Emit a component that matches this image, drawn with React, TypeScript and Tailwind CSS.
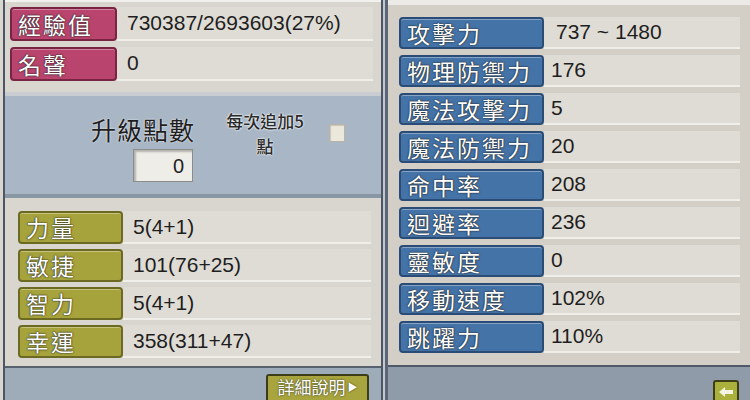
import React from "react";

const cjk = { fontFamily: '"Noto Sans CJK TC", "Noto Sans CJK SC", sans-serif' };
const num = { fontFamily: '"Liberation Sans", Arial, sans-serif' };

function Label({ text, tone, w }: { text: string; tone: "pink" | "blue" | "olive"; w: string }) {
  const cls =
    tone === "pink"
      ? "bg-[#b9446d] border-[#7a2443]"
      : tone === "blue"
      ? "bg-[#4473a8] border-[#2a4c76]"
      : "bg-[#a6a33c] border-[#6c6a22]";
  return (
    <div
      className={`${w} h-full shrink-0 rounded-[4px] border-2 ${cls} flex items-center pl-[6px] text-white text-[23px] leading-none tracking-[2px] [text-shadow:0_0_2px_#222,0_0_1px_#222] shadow-[inset_0_1px_0_rgba(255,255,255,0.35)]`}
      style={cjk}
    >
      {text}
    </div>
  );
}

function Value({ text, pl = "pl-[10px]" }: { text: string; pl?: string }) {
  return (
    <div
      className={`flex-1 h-full flex items-center ${pl} bg-[#dfdcd5] border-b-2 border-[#f0eee9] text-[#1e1e1e] text-[21px]`}
      style={num}
    >
      {text}
    </div>
  );
}

export default function App() {
  const stats = [
    ["力量", "5(4+1)"],
    ["敏捷", "101(76+25)"],
    ["智力", "5(4+1)"],
    ["幸運", "358(311+47)"],
  ];
  const right = [
    ["攻擊力", "737 ~ 1480"],
    ["物理防禦力", "176"],
    ["魔法攻擊力", "5"],
    ["魔法防禦力", "20"],
    ["命中率", "208"],
    ["迴避率", "236"],
    ["靈敏度", "0"],
    ["移動速度", "102%"],
    ["跳躍力", "110%"],
  ];
  return (
    <div className="w-[750px] h-[400px] flex overflow-hidden bg-[#cfccc6]">
      {/* LEFT PANEL */}
      <div className="w-[383px] h-full shrink-0 pl-[3px] bg-[#d9d6d0]">
        <div className="h-full flex flex-col border-l-2 border-r-2 border-[#4d5666]">
          {/* top */}
          <div className="h-[92px] shrink-0 bg-[#d9d6d0] pt-[5px] pr-[8px] flex flex-col gap-[6px] border-t-2 border-[#f2f1ee]">
            <div className="h-[34px] flex items-center pl-[5px]">
              <Label text="經驗值" tone="pink" w="w-[107px]" />
              <Value text="730387/2693603(27%)" />
            </div>
            <div className="h-[34px] flex items-center pl-[5px]">
              <Label text="名聲" tone="pink" w="w-[107px]" />
              <Value text="0" />
            </div>
          </div>
          {/* blue points */}
          <div className="h-[106px] shrink-0 bg-[#a8b6c5] border-t-4 border-[#c9ccd0] border-b-4 border-b-[#8996a4] flex">
            <div className="w-[190px] shrink-0 flex flex-col items-end pt-[19px]">
              <div className="text-[25px] leading-[29px] text-[#1e1e1e] tracking-[1px] [text-shadow:0_0_2px_#fff]" style={cjk}>
                升級點數
              </div>
              <div
                className="mt-[5px] mr-[2px] w-[60px] h-[33px] bg-[#efede8] border border-[#8c8c88] shadow-[inset_2px_2px_2px_rgba(0,0,0,0.25)] flex items-center justify-end pr-[8px] text-[20px] text-[#222]"
                style={num}
              >
                0
              </div>
            </div>
            <div className="ml-[22px] w-[96px] pt-[12px] text-center text-[17px] font-medium leading-[25px] text-[#2a2a2a] [text-shadow:0_0_2px_#fff,0_0_2px_#fff]" style={cjk}>
              每次追加5
              <br />
              點
            </div>
            <div className="ml-[16px] mt-[28px] w-[16px] h-[18px] bg-[#ebe7db] border border-[#b9b4a6] shadow-[inset_1px_1px_1px_rgba(0,0,0,0.15)]" />
          </div>
          {/* stats */}
          <div className="flex-1 bg-[#d9d6d0] pt-[13px] pr-[10px] flex flex-col gap-[5px] border-b-2 border-[#57606e]">
            {stats.map(([l, v]) => (
              <div key={l} className="h-[33px] flex items-center pl-[13px]">
                <Label text={l} tone="olive" w="w-[105px]" />
                <Value text={v} />
              </div>
            ))}
          </div>
          {/* bottom strip */}
          <div className="h-[32px] shrink-0 bg-[#9eabb9] flex justify-end items-start pr-[12px] pt-[6px]">
            <div
              className="w-[103px] h-[26px] rounded-t-[3px] border-2 border-b-0 border-[#3e3d1a] bg-[#a8a53e] text-white text-[17px] leading-[20px] flex items-start pt-[1px] justify-center gap-[2px] [text-shadow:0_0_2px_#222]"
              style={cjk}
            >
              詳細說明<span className="text-[10px] leading-[20px]">▶</span>
            </div>
          </div>
        </div>
      </div>
      {/* gap */}
      <div className="w-[2px] shrink-0 bg-[#c4c8cc]" />
      {/* RIGHT PANEL */}
      <div className="flex-1 h-full flex flex-col border-l-[3px] border-[#5a6678] bg-[#d3cfc7]">
        <div className="flex-1 border-t-[5px] border-[#eceae6] pt-[12px] pr-[10px] flex flex-col gap-[6px]">
          {right.map(([l, v], i) => (
            <div key={l} className="h-[32px] flex items-center pl-[11px]">
              <Label text={l} tone="blue" w="w-[145px]" />
              <Value text={v} pl={i === 0 ? "pl-[12px]" : "pl-[7px]"} />
            </div>
          ))}
        </div>
        <div className="h-[35px] shrink-0 bg-[#8f9ba8] border-t-2 border-[#4f5a68] flex justify-end items-start pr-[11px] pt-[13px]">
          <div className="w-[26px] h-[24px] rounded-[3px] border-2 border-[#3e3d1a] bg-[#a9b03c] flex items-center justify-center">
            <svg width="16" height="12" viewBox="0 0 16 12">
              <path d="M1 6 L7 1 L7 4 L15 4 L15 8 L7 8 L7 11 Z" fill="#f4f4e4" />
            </svg>
          </div>
        </div>
      </div>
    </div>
  );
}
